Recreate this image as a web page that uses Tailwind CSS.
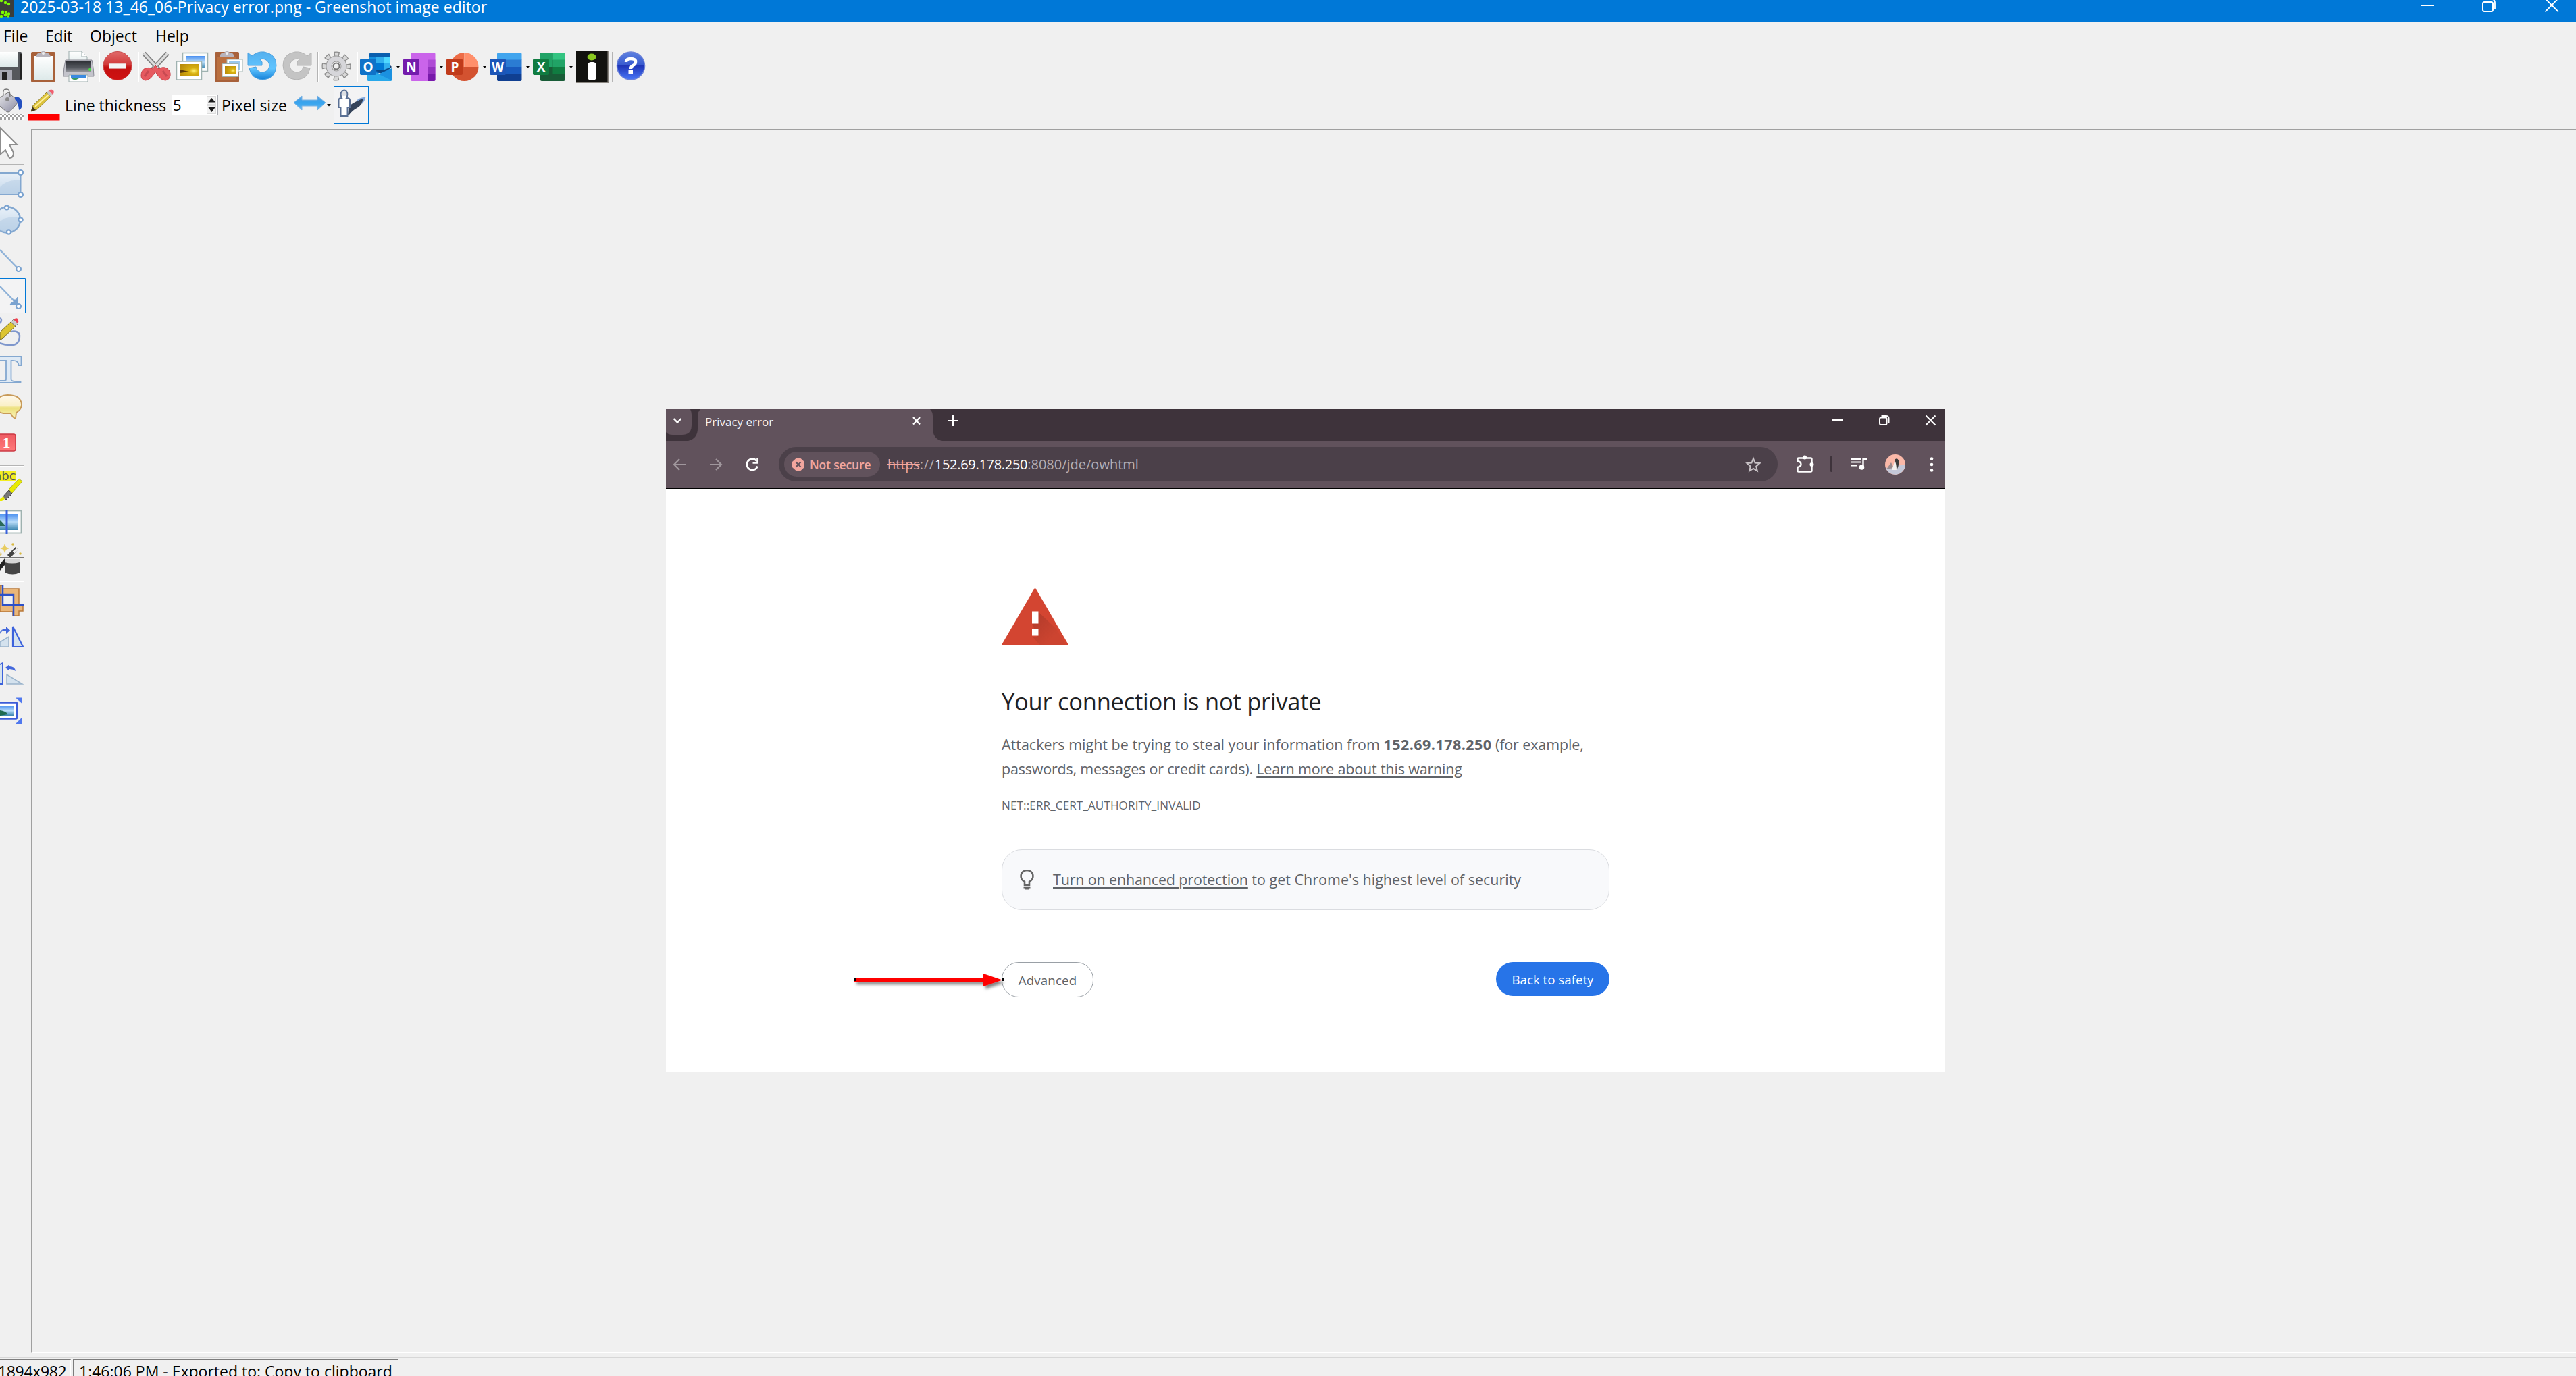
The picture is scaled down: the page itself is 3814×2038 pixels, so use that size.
<!DOCTYPE html>
<html lang="en">
<head>
<meta charset="utf-8">
<title>Greenshot image editor</title>
<script src="https://cdn.jsdelivr.net/npm/@tailwindcss/browser@4"></script>
</head>
<body class="w-[3814px] h-[2038px] overflow-hidden bg-[#f0f0f0] font-['Open_Sans','Noto_Sans',sans-serif] text-black">
<svg width="0" height="0" class="absolute">
  <defs>
    <linearGradient id="red" x1="0" y1="0" x2="0" y2="1"><stop offset="0" stop-color="#e06a6a"/><stop offset=".45" stop-color="#d23a3a"/><stop offset=".55" stop-color="#c41010"/><stop offset="1" stop-color="#d01212"/></linearGradient>
    <linearGradient id="blue" x1="0" y1="0" x2="0" y2="1"><stop offset="0" stop-color="#55b0ee"/><stop offset=".6" stop-color="#5fc4ff"/><stop offset="1" stop-color="#1480d8"/></linearGradient>
    <linearGradient id="arrowblue" x1="0" y1="0" x2="0" y2="1"><stop offset="0" stop-color="#5a9fe0"/><stop offset=".5" stop-color="#35a4ee"/><stop offset="1" stop-color="#6ab8f0"/></linearGradient>
    <linearGradient id="help" x1="0" y1="0" x2="0" y2="1"><stop offset="0" stop-color="#5c80e0"/><stop offset=".45" stop-color="#3a5cd0"/><stop offset=".5" stop-color="#1f35b8"/><stop offset="1" stop-color="#4a78f8"/></linearGradient>
    <linearGradient id="paper" x1="0" y1="0" x2="0" y2="1"><stop offset="0" stop-color="#ffffff"/><stop offset="1" stop-color="#dde9e9"/></linearGradient>
    <linearGradient id="shape" x1="0" y1="0" x2="0" y2="1"><stop offset="0" stop-color="#e8f0f8"/><stop offset="1" stop-color="#c2d6ea"/></linearGradient>
    <linearGradient id="sky" x1="0" y1="0" x2="0" y2="1"><stop offset="0" stop-color="#4a90f0"/><stop offset=".5" stop-color="#b8dcf8"/><stop offset="1" stop-color="#3c86b0"/></linearGradient>
    <radialGradient id="gold" cx=".75" cy=".55" r=".8"><stop offset="0" stop-color="#fff070"/><stop offset=".3" stop-color="#d8b010"/><stop offset="1" stop-color="#b88a08"/></radialGradient>
    <linearGradient id="metal" x1="0" y1="0" x2="1" y2="1"><stop offset="0" stop-color="#f0f0f0"/><stop offset="1" stop-color="#8888a0"/></linearGradient>
    <linearGradient id="printer" x1="0" y1="0" x2="0" y2="1"><stop offset="0" stop-color="#2c2e34"/><stop offset=".6" stop-color="#55585f"/><stop offset="1" stop-color="#9a9ca2"/></linearGradient>
    <linearGradient id="bubble" x1="0" y1="0" x2="0" y2="1"><stop offset="0" stop-color="#fff8ec"/><stop offset=".45" stop-color="#faf0c8"/><stop offset=".55" stop-color="#ece07a"/><stop offset="1" stop-color="#fbf4c0"/></linearGradient>
    <linearGradient id="shadow" x1="0" y1="0" x2="1" y2="1"><stop offset="0" stop-color="#b03a2a"/><stop offset=".7" stop-color="#cc4430"/></linearGradient>
    <linearGradient id="counter" x1="0" y1="0" x2="0" y2="1"><stop offset="0" stop-color="#ee5a62"/><stop offset="1" stop-color="#ff7a7a"/></linearGradient>
    <pattern id="checker" width="6" height="6" patternUnits="userSpaceOnUse"><rect width="6" height="6" fill="#fff"/><rect width="3" height="3" fill="#a0a0a0"/><rect x="3" y="3" width="3" height="3" fill="#a0a0a0"/></pattern>
    <filter id="soft" x="-20%" y="-60%" width="140%" height="260%"><feDropShadow dx="3" dy="4" stdDeviation="2" flood-color="#000" flood-opacity=".5"/></filter>
  </defs>
</svg>
<div class="flex flex-col w-full h-full">
  <!-- Title bar -->
  <header class="flex h-8 bg-[#0078d7] text-white overflow-hidden shrink-0">
    <svg class="block shrink-0" width="30" height="32" viewBox="0 0 30 32"><rect width="21" height="25" fill="#3b3d3a"/><g fill="#7dfb00"><circle cx="2" cy="1" r="2.2"/><circle cx="8" cy="4" r="2.2"/><circle cx="13" cy="6" r="2.2"/><circle cx="4" cy="18" r="2.4"/><circle cx="9" cy="18" r="2"/><circle cx="13" cy="20.500" r="2.2"/><circle cx="8" cy="22" r="2.4"/><circle cx="2" cy="24" r="2.2"/><circle cx="12" cy="24" r="1.800"/></g></svg>
    <span class="text-[23px] leading-5 whitespace-pre tracking-[0.02px]">2025-03-18 13_46_06-Privacy error.png - Greenshot image editor</span>
    <svg class="block shrink-0 ml-auto" width="254" height="32" viewBox="3560 0 254 32" fill="none" stroke="#fff" stroke-width="2"><path d="M3584 8h20"/><rect x="3676" y="3" width="15" height="14" rx="2.500"/><path d="M3678 -1h11q5 0 5 5v9.500M3768.500 -2l19.500 19.500M3787.500 -2l-19 19.500" stroke-width="1.800"/></svg>
  </header>
  <!-- Menu -->
  <nav class="flex items-center h-[42px] pl-[5px] text-[23px] leading-8 shrink-0">
    <span class="w-[62px]">File</span><span class="w-[66px] tracking-[-0.2px]">Edit</span><span class="w-[97px]">Object</span><span>Help</span>
  </nav>
  <!-- Main toolbar -->
  <div class="flex h-[52px] shrink-0">
    <svg class="block shrink-0" width="40" height="52" viewBox="0 74 40 52"><path d="M0 77h31l2 2v38l-2 2H0z" fill="#55585c"/><path d="M29 79l3 1v37l-3 1z" fill="#222"/><rect x="-2" y="77" width="29" height="22" fill="url(#paper)"/><rect x="0" y="103" width="18" height="15" fill="#a8aab4"/><rect x="3" y="106" width="7" height="12" fill="#222"/></svg>
    <svg class="block shrink-0" width="48" height="52" viewBox="40 74 48 52"><rect x="46" y="77" width="36" height="45" rx="2" fill="#a8613a"/><rect x="50" y="83" width="28" height="36" fill="url(#paper)"/><path d="M53 85q1-7 7-7 4-5 8 0 6 0 7 7z" fill="#b8b4bc"/><circle cx="64" cy="79" r="2" fill="#eee"/></svg>
    <svg class="block shrink-0" width="60" height="52" viewBox="88 74 60 52"><path d="M102 76h19l8 8v14h-27z" fill="url(#paper)" stroke="#9aabab"/><path d="M121 76v8h8" fill="#fff" stroke="#9aabab"/><path d="M97 89h39q3 13 3 24h-45q0-12 3-24z" fill="#c4c4cc" stroke="#8a8a94"/><path d="M98 90h36v17h-36z" fill="url(#printer)"/><circle cx="133" cy="103" r="2" fill="#44e044"/><path d="M102 111h28v10h-28z" fill="#fff" stroke="#9aabab"/><path d="M105 111h22v5h-22z" fill="#3a8ae0"/><path d="M105 116h12l-6 3z" fill="#3a9a60"/><path d="M146.500 77v45" stroke="#b4b4b4"/><path d="M147.500 77v45" stroke="#fff"/></svg>
    <svg class="block shrink-0" width="58" height="52" viewBox="148 74 58 52"><circle cx="174" cy="97.500" r="21" fill="url(#red)" stroke="#c84848"/><rect x="161.500" y="94" width="25" height="7.500" fill="#f4f4f4" stroke="#d89090"/><path d="M204.500 77v45" stroke="#b4b4b4"/><path d="M205.500 77v45" stroke="#fff"/></svg>
    <svg class="block shrink-0" width="52" height="52" viewBox="206 74 52 52"><path d="M213 79l23 25M248 79l-23 25" stroke="#808080" stroke-width="7"/><path d="M213 79l23 25M248 79l-23 25" stroke="#dcdcdc" stroke-width="3.500"/><path d="M230 97l5 5q6-4 12-1 6 4 5 11-1 6-7 7-8 0-15-13-7 13-15 13-6-1-6-7 0-8 6-11 6-2 11 1z" fill="#e65a60" stroke="#c83c44"/><path d="M214 113l6-8M247 113l-6-8" stroke="#c84a52" stroke-width="3"/></svg>
    <svg class="block shrink-0" width="54" height="52" viewBox="258 74 54 52"><rect x="270.500" y="78.500" width="37" height="27" fill="#fafcfc" stroke="#9fb2b0" stroke-width="1.500"/><rect x="275" y="83" width="28" height="18" fill="url(#sky)"/><rect x="261.500" y="91" width="37" height="27" fill="#fff" stroke="#9fb2b0" stroke-width="1.500"/><rect x="266" y="95" width="28" height="18" fill="url(#gold)"/><path d="M266 103l14 3-14 2z" fill="#5a3a08"/></svg>
    <svg class="block shrink-0" width="52" height="52" viewBox="312 74 52 52"><rect x="318" y="77" width="36" height="45" rx="2" fill="#a8613a"/><rect x="322" y="84" width="28" height="35" fill="#bb7040"/><path d="M325 84q1-6 7-6 4-5 8 0 6 0 7 6z" fill="#b8b4bc"/><circle cx="336" cy="79" r="2" fill="#eee"/><rect x="336" y="88" width="23" height="18" fill="#fff" stroke="#9fb2b0"/><rect x="339" y="91" width="17" height="12" fill="#9ac8ee"/><rect x="329" y="94.500" width="24" height="19" fill="#fff" stroke="#9fb2b0"/><rect x="333" y="98" width="16" height="12" fill="url(#gold)"/></svg>
    <svg class="block shrink-0" width="50" height="52" viewBox="364 74 50 52"><path d="M367 78l6 5q8-7 18-6 18 3 18 20-1 20-20 21-17-1-20-17l10-2q2 8 10 8 9-1 10-10-1-9-11-10l-3 1 3 4v5h-21z" fill="url(#blue)" stroke="#4aa0e0"/></svg>
    <svg class="block shrink-0" width="58" height="52" viewBox="414 74 58 52"><path d="M461 78l-6 5q-8-7-18-6-18 3-18 20 1 20 20 21 17-1 20-17l-10-2q-2 8-10 8-9-1-10-10 1-9 11-10l3 1-3 4v5h21z" fill="#c4c4c4" stroke="#b4b4b4"/><path d="M470.500 77v45" stroke="#b4b4b4"/><path d="M471.500 77v45" stroke="#fff"/></svg>
    <svg class="block shrink-0" width="58" height="52" viewBox="472 74 58 52"><circle cx="498" cy="98" r="17" fill="none" stroke="#8c8c8c" stroke-width="9" stroke-dasharray="7.500 5.850" stroke-dashoffset="3.750"/><circle cx="498" cy="98" r="17" fill="none" stroke="#d8d8d8" stroke-width="6.500" stroke-dasharray="5 8.350" stroke-dashoffset="2.500"/><circle cx="498" cy="98" r="11" fill="none" stroke="#9a9a9a" stroke-width="9"/><circle cx="498" cy="98" r="11" fill="none" stroke="#d6d6da" stroke-width="7"/><circle cx="498" cy="98" r="4.500" fill="#f0f0f0" stroke="#777" stroke-width="2"/><path d="M528.500 77v45" stroke="#b4b4b4"/><path d="M529.500 77v45" stroke="#fff"/></svg>
    <svg class="block shrink-0" width="64" height="52" viewBox="530 74 64 52"><rect x="547" y="78" width="31" height="30" rx="2" fill="#0a5fae"/><rect x="547" y="84" width="10" height="10" fill="#1490df"/><rect x="557" y="84" width="11" height="10" fill="#32b0ee"/><rect x="568" y="84" width="10" height="10" fill="#50d9ff"/><rect x="557" y="94" width="11" height="10" fill="#0078d4"/><rect x="568" y="94" width="10" height="9" fill="#32b0ee"/><path d="M578 97l2 2-2 2z" fill="#123b6d"/><path d="M544 102l18 7 18-8v17q0 2-2 2h-32q-2 0-2-2z" fill="#1b91e0"/><path d="M555 103l8 5.500 15-7v-2l-10 4h-13z" fill="#0a4a8a"/><path d="M544 102l36 17q-1 1-2 1h-32q-2 0-2-2z" fill="#28a8ea"/><rect x="533" y="87" width="24" height="24" rx="2" fill="#0f72c8"/><text x="545" y="106" font-size="19" font-weight="700" fill="#fff" text-anchor="middle">O</text><path d="M587 98h5l-2.500 3z"/></svg>
    <svg class="block shrink-0" width="64" height="52" viewBox="594 74 64 52"><rect x="608" y="78" width="36.500" height="42" rx="2" fill="#ca64ea"/><rect x="634" y="88.500" width="10.500" height="10.500" fill="#ae4bd5"/><rect x="634" y="99" width="10.500" height="10.500" fill="#9332bf"/><path d="M634 109.500h10.500v8.500q0 2-2 2h-8.500z" fill="#7719aa"/><rect x="597" y="87" width="24" height="24" rx="2" fill="#741bac"/><text x="609" y="106" font-size="19" font-weight="700" fill="#fff" text-anchor="middle">N</text><path d="M651 98h5l-2.500 3z"/></svg>
    <svg class="block shrink-0" width="64" height="52" viewBox="658 74 64 52"><path d="M687.500 78v21h-21a21 21 0 0 1 21-21z" fill="#ed6c47"/><path d="M687.500 78a21 21 0 0 1 21 21h-21z" fill="#ff8f6b"/><path d="M666.500 99h42a21 21 0 0 1-42 0z" fill="#d35230"/><rect x="661" y="87" width="24" height="24" rx="2" fill="#c03b1b"/><text x="673.500" y="106" font-size="19" font-weight="700" fill="#fff" text-anchor="middle">P</text><path d="M715 98h5l-2.500 3z"/></svg>
    <svg class="block shrink-0" width="64" height="52" viewBox="722 74 64 52"><path d="M738 78h32.500q2 0 2 2v9h-36.500v-9q0-2 2-2z" fill="#41a5ee"/><path d="M736 88.500h36.500v10.500h-36.500z" fill="#2b7cd3"/><path d="M736 99h36.500v10.500h-36.500z" fill="#185abd"/><path d="M736 109.500h36.500v8.500q0 2-2 2h-32.500q-2 0-2-2z" fill="#103f91"/><rect x="725" y="87" width="24" height="24" rx="2" fill="#1c56b8"/><text x="737" y="106" font-size="19" font-weight="700" fill="#fff" text-anchor="middle" textLength="18" lengthAdjust="spacingAndGlyphs">W</text><path d="M779 98h5l-2.500 3z"/></svg>
    <svg class="block shrink-0" width="64" height="52" viewBox="786 74 64 52"><rect x="800" y="78" width="36.500" height="42" rx="2" fill="#185c37"/><path d="M802 78h16.500v21h-18.500v-19q0-2 2-2z" fill="#21a366"/><path d="M818.500 78h16q2 0 2 2v9h-18z" fill="#33c481"/><path d="M818.500 88.500h18v10.500h-18z" fill="#21a366"/><path d="M800 99h18.500v10.500h-18.500z" fill="#185c37"/><path d="M818.500 99h18v10.500h-18z" fill="#107c41"/><rect x="789" y="87" width="24" height="24" rx="2" fill="#107c41"/><text x="801" y="106" font-size="19" font-weight="700" fill="#fff" text-anchor="middle">X</text><path d="M843 98h5l-2.500 3z"/></svg>
    <svg class="block shrink-0" width="58" height="52" viewBox="850 74 58 52"><path d="M853 75h48v48h-48z" fill="#8a8680"/><path d="M853 75h46.500v46.500h-46.500z" fill="#12120f"/><ellipse cx="876" cy="84.500" rx="6.500" ry="5" fill="#8ac820"/><rect x="870" y="92" width="13" height="27" rx="5" fill="#fff"/><path d="M906.500 77v45" stroke="#b4b4b4"/><path d="M907.500 77v45" stroke="#fff"/></svg>
    <svg class="block shrink-0" width="60" height="52" viewBox="908 74 60 52"><circle cx="934" cy="97.500" r="20.500" fill="url(#help)" stroke="#6a80d8" stroke-width="1.500"/><path d="M927 92q0-5 7-5t7 4.500q0 4-4 5.500-3 1.500-3 5" fill="none" stroke="#fff" stroke-width="4.500"/><rect x="930.500" y="104" width="6.500" height="5.500" fill="#fff"/></svg>
  </div>
  <!-- Property toolbar -->
  <div class="flex items-center h-[58px] shrink-0 text-[23px] leading-8">
    <svg class="block shrink-0" width="96" height="58" viewBox="0 126 96 58"><path d="M-6 148L12 137l16 13-13 15q-3 2-6 0L-6 152z" fill="url(#metal)" stroke="#777"/><path d="M5 140q-2-8 5-8 5 0 5 12" fill="none" stroke="#777" stroke-width="1.500"/><circle cx="11" cy="147" r="3" fill="#888"/><path d="M22 143q11 0 11 12 0 5-5 8-1-12-6-16z" fill="#2450c0"/><rect x="0" y="169" width="35" height="9" fill="url(#checker)"/><path d="M46 165l3-9L69 137l6 6-20 19z" fill="#dcc23a" stroke="#8a7a30"/><path d="M52 158l20-18" stroke="#fff0a0" stroke-width="2"/><path d="M69 137l3-3 6 6-3 3z" fill="#c8c8c8"/><path d="M72 134q4-3 7 0 2 3-1 6z" fill="#f06070"/><path d="M46 165l2-7 5 5z" fill="#40351c"/><rect x="41" y="169" width="47.500" height="9.500" fill="#f00"/></svg>
    <span class="w-[158px] pt-0.5 shrink-0 whitespace-pre tracking-[-0.05px]">Line thickness</span>
    <div class="flex w-[69px] h-[31px] mt-px border border-[#abadb3] bg-white shrink-0">
      <span class="w-[51px] pl-px text-[22px] leading-7">5</span>
      <svg class="block" width="16" height="29" viewBox="0 0 16 29"><rect x=".5" y="1.500" width="13" height="12" fill="#f2f2f2" stroke="#ddd"/><rect x=".5" y="15.500" width="13" height="12" fill="#f2f2f2" stroke="#ddd"/><path d="M2 10.500h11L7.500 4zM2 17.500h11L7.500 25z" fill="#1a1a1a"/></svg>
    </div>
    <span class="w-[107px] pl-[5px] pt-0.5 shrink-0 whitespace-pre">Pixel size</span>
    <svg class="block shrink-0" width="64" height="58" viewBox="430 126 64 58"><path d="M435 152l12-10v6h23v-6l12 10-12 11v-6h-23v6z" fill="url(#arrowblue)" stroke="#7ab4e4"/><path d="M484 154h6l-3 3.500z"/></svg>
    <svg class="block shrink-0" width="56" height="58" viewBox="494 126 56 58"><rect x="494.500" y="128.500" width="51" height="54" fill="#f3f3f4" stroke="#0078d7"/><path d="M515 170l2-13q6-5 11-7 6-5 12-5-4 10-10 14-9 5-13 11z" fill="#34435a"/><path d="M529 149q5-4 11-4-1 4-4 8" fill="none" stroke="#7fa6dc" stroke-width="2"/><path d="M506 145q-2-4-1-8 5-7 9 0 1 4-1 8 5 0 5 3v11h-3.500v13h-10v-13h-3v-11q0-3 4.500-3z" fill="#fff" stroke="#5a7094" stroke-width="2"/><circle cx="509.500" cy="138.500" r="3.500" fill="#dde0e4"/></svg>
  </div>
  <!-- Workspace -->
  <main class="flex h-[1820px] shrink-0">
    <aside class="flex flex-col w-[46px] shrink-0">
      <svg class="block" width="46" height="64" viewBox="0 184 46 64"><path d="M0 189l25 25h-11l6 12q0 8-6 8L8 222l-8 7z" fill="#fff" stroke="#8e8e8e" stroke-width="2"/><path d="M0 243.500h36" stroke="#b4b4b4"/><path d="M0 244.500h36" stroke="#fff"/></svg>
      <svg class="block" width="46" height="50" viewBox="0 248 46 50"><rect x="-4" y="256" width="34.500" height="32" fill="url(#shape)" stroke="#84a8d0" stroke-width="2"/><path d="M-2 280q10-15 31-13v20H-2z" fill="#b4cce4" opacity=".5"/><g fill="#fff" stroke="#7ba3d0" stroke-width="2.200"><circle cx="30.500" cy="255.500" r="3.500"/><circle cx="30.500" cy="288.500" r="3.500"/></g></svg>
      <svg class="block" width="46" height="56" viewBox="0 298 46 56"><circle cx="11" cy="325.500" r="19" fill="url(#shape)" stroke="#84a8d0" stroke-width="2.500"/><path d="M-2 330q12-12 31-7-1 12-10 18-12 5-21-1z" fill="#b4cce4" opacity=".5"/><g fill="#fff" stroke="#7ba3d0" stroke-width="2.200"><circle cx="10" cy="307.500" r="3"/><circle cx="30.500" cy="325.500" r="3.200"/><circle cx="13" cy="343.500" r="3.200"/></g></svg>
      <svg class="block" width="46" height="56" viewBox="0 354 46 56"><path d="M0 370l26 27" stroke="#8fb2d8" stroke-width="2.500"/><circle cx="27.500" cy="398.500" r="3.500" fill="#fff" stroke="#7ba3d0" stroke-width="2.200"/></svg>
      <svg class="block" width="46" height="56" viewBox="0 410 46 56"><path d="M-1 412.500h38.500v51H-1" fill="#f3f3f4" stroke="#0078d7"/><path d="M0 424l24 25" stroke="#8fb2d8" stroke-width="2.500"/><path d="M26 440v11h-11q1-3 5-3v-4h4z" fill="#7ba3d0" stroke="#7ba3d0"/><circle cx="27.500" cy="453.500" r="3.500" fill="#fff" stroke="#7ba3d0" stroke-width="2.200"/></svg>
      <svg class="block" width="46" height="54" viewBox="0 466 46 54"><path d="M0 479q4-6 0-8M16 491q12-2 13 6 0 15-14 14-8 0-16-3" fill="none" stroke="#7f97cc" stroke-width="2.500"/><path d="M0 492l16-15 7 6L3 502l-3 1z" fill="#dcc430" stroke="#7a6c28"/><path d="M16 477l4-4 7 6-4 4z" fill="#ccc" stroke="#888"/><path d="M20 473q6-4 7 1 1 3-1 5z" fill="#f04050"/></svg>
      <svg class="block" width="46" height="56" viewBox="0 520 46 56"><path d="M-4 528h35.500v13h-4q0-8-11-7v28q0 3 7 3h7v2H-2v-3h8q3 0 3-2v-28H-4z" fill="#dfeaf5" stroke="#84a8d0" stroke-width="1.800"/></svg>
      <svg class="block" width="46" height="58" viewBox="0 576 46 58"><path d="M-3 590q6-5 14-5 20 0 21 14 0 8-8 12l-1 9q-5-2-7-8H5q-6-1-8-4z" fill="url(#bubble)" stroke="#c89a58" stroke-width="1.800"/></svg>
      <svg class="block" width="46" height="58" viewBox="0 634 46 58"><rect x="-6" y="643" width="29" height="25" rx="3" fill="url(#counter)" stroke="#cc3a44" stroke-width="1.500"/><text x="9.500" y="663" font-family="DejaVu Serif" font-size="19" font-weight="700" fill="#fff" text-anchor="middle">1</text><path d="M0 689.500h36" stroke="#b4b4b4"/><path d="M0 690.500h36" stroke="#fff"/></svg>
      <svg class="block" width="46" height="56" viewBox="0 692 46 56"><path d="M0 697h24v15H0z" fill="#f4ee20"/><text x="7.500" y="711" font-family="DejaVu Sans" font-size="18" fill="#555" text-anchor="middle">abc</text><path d="M13 725l15-16 5 4-15 17z" fill="#e8ea00" stroke="#a8a830"/><path d="M4 736l9-10 5 5-9 9z" fill="#777" stroke="#444"/><path d="M0 739l5-4 2 4-4 3H0z" fill="#e8ea00"/></svg>
      <svg class="block" width="46" height="54" viewBox="0 748 46 54"><rect x="-4" y="756.500" width="35.500" height="33" fill="#fff" stroke="#9fb2b0" stroke-width="1.800"/><rect x="-2" y="761" width="29" height="24" fill="url(#sky)"/><path d="M0 770q4 4 8 9H0z" fill="#2a6a5a"/><path d="M10 755v36" stroke="#3a62dc" stroke-width="3"/></svg>
      <svg class="block" width="46" height="62" viewBox="0 802 46 62"><path d="M7 805l2 5 5 2-5 2-2 5-2-5-5-2 5-2z" fill="#e8cc60"/><circle cx="19" cy="806" r="1.800" fill="#d8b840"/><circle cx="30" cy="820" r="1.800" fill="#d8b840"/><path d="M1 817l2 4-3 2" fill="#d8b840"/><path d="M13 824l12-12" stroke="#444" stroke-width="6"/><path d="M20 818l6-5" stroke="#eee" stroke-width="4"/><path d="M0 825h35v2H0z" fill="#777"/><path d="M7 828h22v20q-10 5-22 0z" fill="#454545"/><path d="M7 828h22v5q-11 3-22 0z" fill="#d6d6d6"/><path d="M0 836l7-9v10l-7 8z" fill="#222"/><path d="M0 860.500h36" stroke="#b4b4b4"/><path d="M0 861.500h36" stroke="#fff"/></svg>
      <svg class="block" width="46" height="56" viewBox="0 864 46 56"><path d="M0 867h4v5h24v24h6v9h-6v7h-9v-6H0z" fill="#eab678" stroke="#b87838" stroke-width="1.500"/><path d="M5 882h14v14H5z" fill="#f0f0f0"/><path d="M4 867v29h31M0 881h20v31" fill="none" stroke="#2c50c8" stroke-width="2.500"/></svg>
      <svg class="block" width="46" height="54" viewBox="0 920 46 54"><path d="M0 958V951l13-8v15z" fill="#d4e2ee" stroke="#9ab4cc" stroke-width="1.500"/><path d="M19 928v30h15z" fill="#d4e2ee" stroke="#3c62dc" stroke-width="2.200"/><path d="M0 938q3-6 7-5" fill="none" stroke="#6080d8" stroke-width="2"/><path d="M5 932h4v-4l6 5.500-6 5.500v-4H5z" fill="#4468dc"/></svg>
      <svg class="block" width="46" height="52" viewBox="0 974 46 52"><path d="M0 984l4-2v31H0" fill="#d4e2ee" stroke="#3c62dc" stroke-width="2"/><path d="M10 999v14h23z" fill="#d4e2ee" stroke="#9ab4cc" stroke-width="1.500"/><path d="M8 989l6-5v3q8 0 9 7-4-3-9-3v3z" fill="#4468dc"/></svg>
      <svg class="block" width="46" height="56" viewBox="0 1026 46 56"><rect x="-4" y="1040.500" width="29" height="24" rx="1.500" fill="#fff" stroke="#3c5cd8" stroke-width="2.500"/><rect x="-1" y="1045" width="21" height="15" fill="url(#sky)"/><path d="M0 1052q8 1 12 6l-12 2z" fill="#1f6a50"/><path d="M23 1033.500h9v8zM32 1063v9h-9z" fill="#5078ee"/></svg>
    </aside>
    <!-- Canvas -->
    <div class="flex-1 mt-[7px] h-[1813px] border-t border-l border-[#a0a0a0] border-b border-b-white">
      <div class="h-full border-t border-l border-[#696969] border-b border-b-[#e3e3e3] pt-[413px] pl-[938px]">
        <div class="relative w-[1894px] h-[982px] bg-white flex flex-col">
          <!-- Tab strip -->
          <div class="relative h-[47px] bg-[#3e333b] flex shrink-0 text-white">
            <svg class="absolute left-0 top-0" width="420" height="47" viewBox="986 606 420 47" fill="#61525c"><path d="M986 606h36q2 4 2 8v16q0 14-14 14h-14q-7 0-10-4z"/><path d="M1019 653q14-4 14-18v-19q0-6 4-10h340q4 4 4 10v19q0 14 13 18z"/></svg>
            <svg class="relative block shrink-0" width="58" height="47" viewBox="986 606 58 47" fill="none" stroke="#fff" stroke-width="2.400"><path d="M997.500 620l5.500 5.500 5.500-5.500"/></svg>
            <span class="relative w-[297px] text-[17px] leading-[37px] text-[#f4f0f2]">Privacy error</span>
            <svg class="relative block shrink-0" width="90" height="47" viewBox="1341 606 90 47" fill="none" stroke="#fff" stroke-width="2.200"><path d="M1352 618l10 10.500M1362 618l-10 10.500M1403 623h16M1411 615v16"/></svg>
            <svg class="block shrink-0 ml-auto" width="190" height="47" viewBox="2690 606 190 47" fill="none" stroke="#fff" stroke-width="2"><path d="M2713 622h15M2851.500 615.500l14 14M2865.500 615.500l-14 14"/><rect x="2783" y="618.500" width="10.500" height="10.500" rx="2"/><path d="M2785.500 616h7q4 0 4 4v7"/></svg>
          </div>
          <!-- Address bar -->
          <div class="h-[71px] bg-[#61525c] border-b border-black flex pt-[9px] shrink-0">
            <svg class="block shrink-0" width="167" height="51" viewBox="986 662 167 51" fill="none" stroke="#a0979d" stroke-width="2.200"><path d="M1015 688h-16M1006 680l-8 8 8 8M1051 688h16M1060 680l8 8-8 8"/><path d="M1120 682.500a8 8.300 0 1 0 1.500 8M1121.500 679v6.500h-7" stroke="#fff" stroke-width="2.600"/></svg>
            <div class="flex items-center w-[1479px] h-[51px] rounded-full bg-[#4b4049] pl-2 text-[20px] leading-8 text-[#b6aeb3] shrink-0">
              <div class="flex items-center w-[142px] h-[37px] rounded-full bg-[#61525c] pl-3 text-[#f2a69e] shrink-0">
                <svg class="block" width="26" height="20" viewBox="0 0 26 20"><path d="M5.500 1h7L18 6v8l-5.500 5h-7L0 14V6z" fill="#f2a69e"/><path d="M5.500 6.500l7 7M12.500 6.500l-7 7" stroke="#61525c" stroke-width="2"/></svg>
                <span class="text-[17.5px] font-semibold whitespace-pre tracking-[-0.15px]">Not secure</span>
              </div>
              <span class="ml-[11px] whitespace-pre"><span class="text-[#f2a69e] line-through decoration-2 tracking-[-0.1px]">https</span><span class="tracking-[0.7px]">://</span><span class="text-white tracking-[-0.3px]">152.69.178.250</span>:8080/jde/owhtml</span>
              <svg class="block ml-auto mr-[24px]" width="24" height="24" viewBox="0 0 24 24" fill="none" stroke="#c9c3c7" stroke-width="2"><path d="M12 3l2.500 6.500 7 .6-5.300 4.600 1.600 6.800L12 17.900 6.200 21.500l1.600-6.800L2.500 10.100l7-.6z"/></svg>
            </div>
            <svg class="block shrink-0" width="248" height="51" viewBox="2632 662 248 51"><path d="M2663 678.500h18q1.500 0 1.500 1.500v17q0 1.500-1.500 1.500h-18q-1.500 0-1.500-1.500v-5q5-1 5-4.500t-5-4.500v-3q0-1.500 1.500-1.500z" fill="none" stroke="#fff" stroke-width="2.400"/><circle cx="2672" cy="677.500" r="3" fill="#fff"/><circle cx="2682.500" cy="688" r="3" fill="#fff"/><rect x="2710" y="675" width="3" height="24" rx="1.500" fill="#3e333b"/><path d="M2741 680h14M2741 684.500h14M2741 689.500h9" stroke="#fff" stroke-width="2.200"/><path d="M2764 680h-5.500v12" fill="none" stroke="#fff" stroke-width="2.400"/><circle cx="2756.500" cy="692" r="3.800" fill="#fff"/><circle cx="2806" cy="688" r="15" fill="#fab8a8"/><path d="M2792 693q14-3 29-5a15 15 0 0 1-29 5z" fill="#c4c8d8"/><path d="M2793 695l7-10 4 8z" fill="#9a8a8c"/><path d="M2805 684q3-3 4 2 1 6-1 10h-7q2-6 4-12z" fill="#f4f0ee"/><path d="M2805 681q4-4 6 1 1 8-3 14 0-9-3-15z" fill="#3c3c3c"/><g fill="#fff"><circle cx="2860" cy="679.500" r="2.300"/><circle cx="2860" cy="688" r="2.300"/><circle cx="2860" cy="696.500" r="2.300"/></g></svg>
          </div>
          <!-- Page -->
          <div class="pl-[497px] pt-[146px] text-[#5f6368]">
            <svg class="block" width="100" height="85" viewBox="1483 870 100 85"><path d="M1532.500 870l49.500 85h-99z" fill="#d34531"/><path d="M1537 906l27.500 26 13 23h-38l-11-12 7 0-7-19z" fill="url(#shadow)"/><path d="M1528 905.500h9.500v18h-9.500zM1528 932h9.500v9.500h-9.500z" fill="#fff"/></svg>
            <h1 class="mt-[60px] text-[34.5px] leading-[48px] text-[#202124] whitespace-pre tracking-[-0.25px]">Your connection is not private</h1>
            <p class="mt-[22px] text-[21.5px] leading-9 whitespace-pre">Attackers might be trying to steal your information from <b class="tracking-[0.45px]">152.69.178.250</b><span class="tracking-[-0.12px]"> (for example,</span><br><span class="tracking-[-0.2px]">passwords, messages or credit cards). </span><span class="underline decoration-2 underline-offset-[3px] tracking-[-0.17px]">Learn more about this warning</span></p>
            <p class="mt-[18px] text-[17px] leading-9 whitespace-pre tracking-[0.15px]">NET::ERR_CERT_AUTHORITY_INVALID</p>
            <div class="mt-[47px] flex items-center w-[900px] h-[90px] rounded-[30px] border border-[#dadce0] bg-[#f8f9fb] pl-[26px] text-[21.5px]">
              <svg class="block shrink-0 mr-[28px]" width="21" height="30" viewBox="0 0 21 30"><path d="M7 23v-5q-5.500-3-5.500-8.500a9 8.500 0 0 1 18 0q0 5.500-5.500 8.500v5z" fill="none" stroke="#666" stroke-width="2.600"/><path d="M5.500 26.500h10M7 28.500h7" stroke="#666" stroke-width="2.200"/></svg>
              <span class="whitespace-pre pt-px"><span class="underline decoration-2 underline-offset-[3px] tracking-[-0.16px]">Turn on enhanced protection</span> to get Chrome's highest level of security</span>
            </div>
            <div class="mt-[77px] flex justify-between w-[900px] text-[18.7px]">
              <div class="w-[136px] h-[52px] rounded-[25px] border border-[#9aa0a6] flex items-center justify-center pt-0.5 tracking-[0.15px]">Advanced</div>
              <div class="w-[168px] h-[50px] rounded-full bg-[#2774e8] text-white flex items-center justify-center pt-0.5">Back to safety</div>
            </div>
          </div>
          <!-- Arrow annotation -->
          <svg class="absolute left-[274px] top-[826px]" width="240" height="50" viewBox="1260 1432 240 50"><path d="M1265 1449h191v-7l28 9.500-28 9.500v-7h-191z" fill="#f00" filter="url(#soft)"/><path d="M1264 1449h4v4h-4zM1483 1449h4v4h-4z"/></svg>
        </div>
      </div>
    </div>
  </main>
  <!-- Status bar -->
  <footer class="mt-1.5 pt-0.5 h-[30px] border-t border-[#d7d7d7] flex gap-[3px] text-[23px] leading-8 shrink-0 overflow-hidden whitespace-pre">
    <div class="w-[105px] h-9 border-t-2 border-r border-t-[#7c7c7c] border-r-white tracking-[-0.35px]"><span class="-ml-[3px]">1894x982</span></div>
    <div class="w-[482px] h-9 border-t-2 border-l-2 border-r border-t-[#7c7c7c] border-l-[#7c7c7c] border-r-white pl-[7px]">1:46:06 PM - Exported to: Copy to clipboard</div>
  </footer>
</div>
</body>
</html>
